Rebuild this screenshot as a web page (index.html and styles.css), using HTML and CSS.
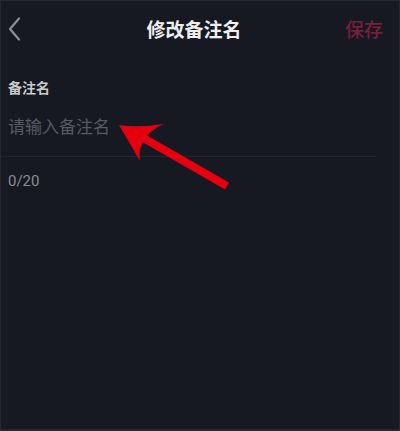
FILE: index.html
```html
<!DOCTYPE html>
<html>
<head>
    <meta charset="UTF-8">
    <title>修改备注名</title>
    <link rel="stylesheet" href="styles.css">
</head>
<body>
<div class="page">
    <div class="top-bar">
        <a class="back" href="#">
            <svg width="14" height="24" viewBox="0 0 14 24">
                <polyline points="11,1.5 2,12 11,22.5" fill="none" stroke="#8b8e96" stroke-width="2.2" stroke-linecap="round" stroke-linejoin="round"/>
            </svg>
        </a>
        <div class="title">修改备注名</div>
        <a class="save" href="#">保存</a>
    </div>

    <form id="remark-form" class="remark-form">
        <label for="remark">备注名</label>
        <input type="text" id="remark" name="remark" maxlength="20" placeholder="请输入备注名">
        <div class="count">0/20</div>
    </form>

    <!-- 红色箭头 -->
    <svg class="pointer" width="400" height="431" viewBox="0 0 400 431">
        <line x1="227" y1="186" x2="140" y2="136" stroke="#e4000f" stroke-width="8"/>
        <path d="M119,125 Q140,128 163,124 Q146,133 144,141 Q138,148 140,161 Q129,142 119,125 Z" fill="#e4000f"/>
    </svg>
</div>

<script>
    var input = document.getElementById("remark");
    input.addEventListener("input", function () {
        document.querySelector(".count").innerHTML = input.value.length + "/20";
    });
</script>
</body>
</html>
```

FILE: styles.css
```css
body {
    margin: 0;
    font-family: "Noto Sans CJK SC", Roboto, sans-serif;
    background-color: #161922;
}
.page {
    position: relative;
    width: 400px;
    height: 431px;
    box-sizing: border-box;
    border: 1px solid #262933;
    border-bottom-width: 2px;
    background-color: #161922;
    overflow: hidden;
}
.top-bar {
    display: flex;
    align-items: center;
    height: 55px;
}
.back {
    display: flex;
    width: 30px;
    padding-left: 7px;
}
.title {
    flex: 1;
    text-align: center;
    color: #eeeef0;
    font-size: 19px;
    font-weight: bold;
    padding-left: 7px;
}
.save {
    color: #7a1e3a;
    font-size: 19px;
    font-weight: 500;
    text-decoration: none;
    padding-right: 16px;
    padding-left: 2px;
}
.remark-form {
    padding: 21px 0 0 7px;
}
label {
    display: block;
    color: #c9cacd;
    font-size: 14px;
    font-weight: bold;
    line-height: 20px;
}
input[type="text"] {
    display: block;
    width: 375px;
    height: 56px;
    box-sizing: border-box;
    margin: 4px 0 0 -7px;
    padding: 0 0 6px 7px;
    border: none;
    border-bottom: 1px solid #22252e;
    background: transparent;
    color: #e0e0e3;
    font-family: "Noto Sans CJK SC", sans-serif;
    font-size: 17px;
    outline: none;
}
input[type="text"]::placeholder {
    color: #575a62;
}
.count {
    margin-top: 15px;
    color: #8a8c93;
    font-family: Roboto, sans-serif;
    font-size: 15px;
}
.pointer {
    position: absolute;
    left: -1px;
    top: -1px;
}
```
